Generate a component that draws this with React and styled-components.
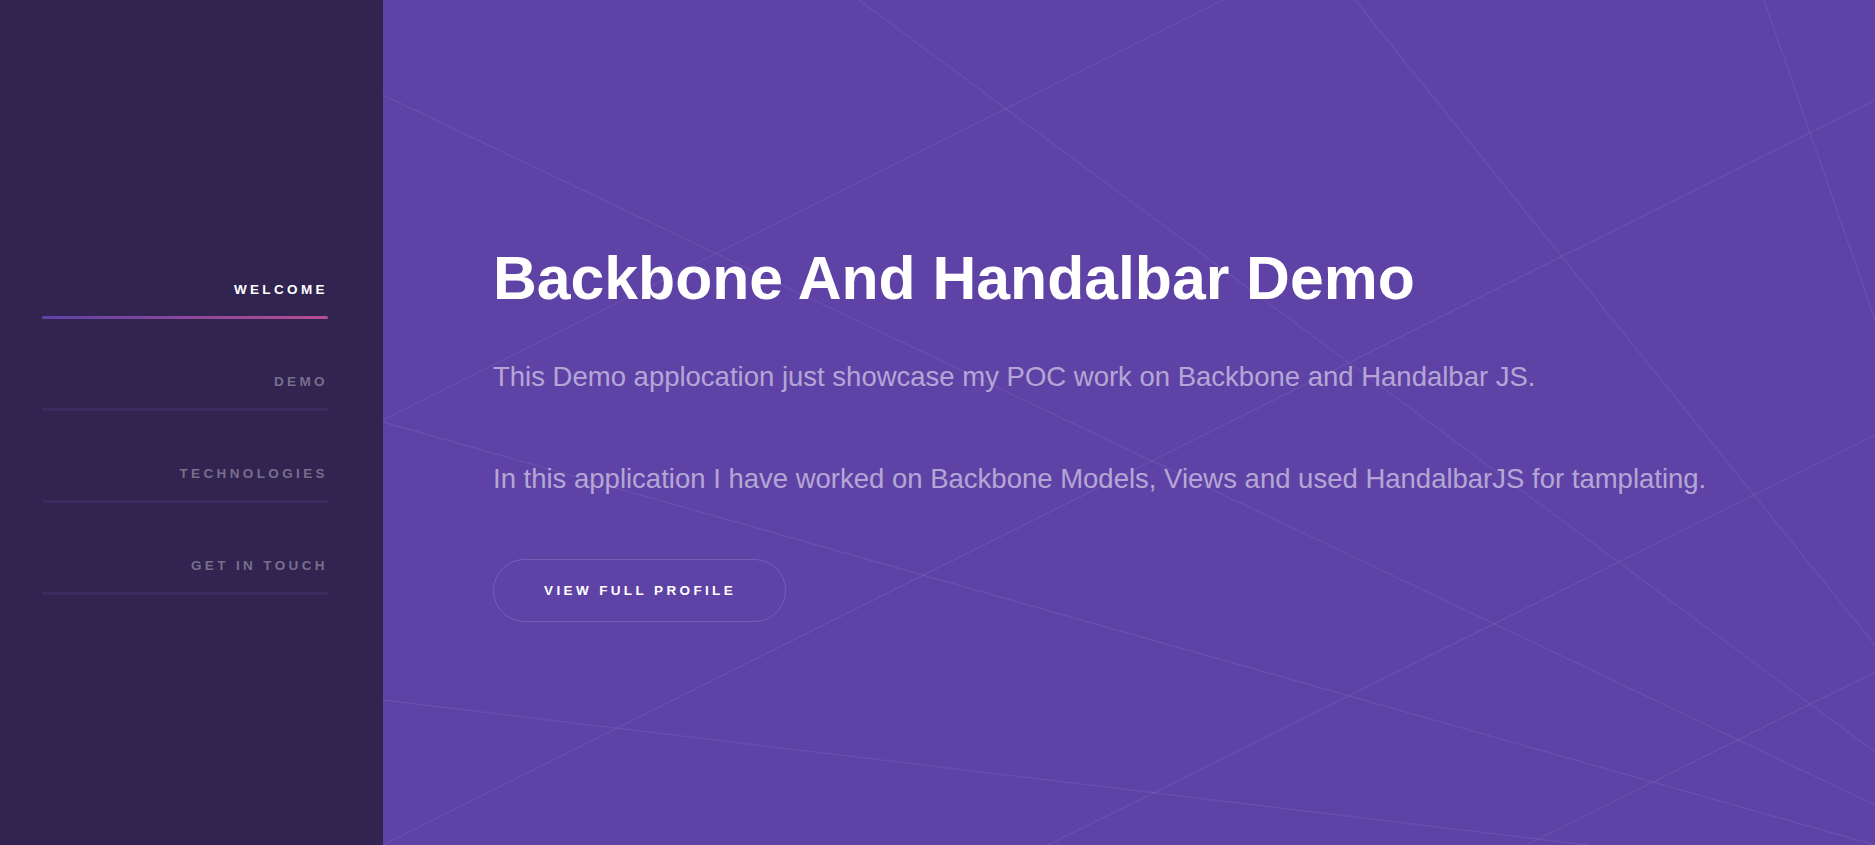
import styled, { createGlobalStyle } from 'styled-components'

const GlobalStyle = createGlobalStyle`
  html, body {
    margin: 0;
    padding: 0;
    height: 100%;
  }
  body {
    background: #5e42a6;
    font-family: "Liberation Sans", Arial, Helvetica, sans-serif;
  }
  * {
    box-sizing: border-box;
  }
`

const navItems = [
  { label: 'Welcome', active: true },
  { label: 'Demo' },
  { label: 'Technologies' },
  { label: 'Get in touch' },
]

// mesh lines in the hero background, main panel coords (1492 x 845)
const meshLines = [
  [476, 0, 1492, 752],
  [840, 0, 0, 420],
  [0, 95, 1492, 805],
  [972, 0, 1492, 645],
  [1381, 0, 1492, 320],
  [1492, 100, 0, 845],
  [0, 422, 1492, 845],
  [0, 700, 1205, 845],
  [1492, 435, 665, 845],
  [1492, 672, 1143, 845],
]

const App = () => {
  return (
    <Page>
      <GlobalStyle />
      <Sidebar>
        <Nav>
          {navItems.map(item => (
            <NavLink key={item.label} href="#" $active={item.active}>
              {item.label}
            </NavLink>
          ))}
        </Nav>
      </Sidebar>
      <Main>
        <Mesh viewBox="0 0 1492 845" preserveAspectRatio="none">
          {meshLines.map(([x1, y1, x2, y2], i) => (
            <line key={i} x1={x1} y1={y1} x2={x2} y2={y2} />
          ))}
        </Mesh>
        <Intro>
          <Title>Backbone And Handalbar Demo</Title>
          <Text>This Demo applocation just showcase my POC work on Backbone and Handalbar JS.</Text>
          <Text>In this application I have worked on Backbone Models, Views and used HandalbarJS for tamplating.</Text>
          <Actions>
            <PillButton href="#">View full profile</PillButton>
          </Actions>
        </Intro>
      </Main>
    </Page>
  )
}

const Page = styled.div`
  display: flex;
  flex-direction: row;
  width: 100%;
  height: 100vh;
  overflow: hidden;
`
const Sidebar = styled.aside`
  flex: 0 0 383px;
  height: 100%;
  background: #312450;
  display: flex;
  flex-direction: column;
  justify-content: center;
  padding: 40px 55px 30px 42px;
  text-align: right;
`
const Nav = styled.nav`
  display: flex;
  flex-direction: column;
  gap: 32.5px;
`
const NavLink = styled.a`
  position: relative;
  display: block;
  padding: 23px 0;
  font-size: 13.5px;
  line-height: 1;
  font-weight: bold;
  letter-spacing: 0.25em;
  text-transform: uppercase;
  text-decoration: none;
  color: ${p => (p.$active ? '#ffffff' : 'rgba(255, 255, 255, 0.35)')};
  &:after {
    content: '';
    position: absolute;
    left: 0;
    right: 0;
    bottom: 0;
    height: 3px;
    border-radius: 3px;
    background: ${p => (p.$active ? 'linear-gradient(to right, #5e42a6, #b74e91)' : '#3b2b61')};
  }
`
const Main = styled.main`
  position: relative;
  flex: 1;
  height: 100%;
  background: #5e42a6;
  display: flex;
  flex-direction: column;
  justify-content: center;
  padding: 40px 110px 19px 110px;
  overflow: hidden;
`
const Mesh = styled.svg`
  position: absolute;
  inset: 0;
  width: 100%;
  height: 100%;
  z-index: 0;
  & line {
    stroke: rgba(255, 255, 255, 0.075);
    stroke-width: 1.3;
  }
`
const Intro = styled.section`
  position: relative;
  z-index: 1;
  display: flex;
  flex-direction: column;
  align-items: flex-start;
`
const Title = styled.h1`
  margin: 0 0 44px 0;
  font-size: 60.7px;
  line-height: 66px;
  font-weight: bold;
  color: #ffffff;
`
const Text = styled.p`
  margin: 0 0 58px 0;
  font-size: 27.5px;
  line-height: 44.5px;
  color: rgba(255, 255, 255, 0.55);
  &:last-of-type {
    margin-bottom: 57px;
  }
`
const Actions = styled.div`
  display: flex;
`
const PillButton = styled.a`
  display: inline-block;
  height: 63px;
  line-height: 61px;
  padding: 0 49px 0 50px;
  border: 1px solid rgba(255, 255, 255, 0.15);
  border-radius: 32px;
  font-size: 13.5px;
  font-weight: bold;
  letter-spacing: 0.25em;
  text-transform: uppercase;
  text-decoration: none;
  color: #ffffff;
`

export default App
